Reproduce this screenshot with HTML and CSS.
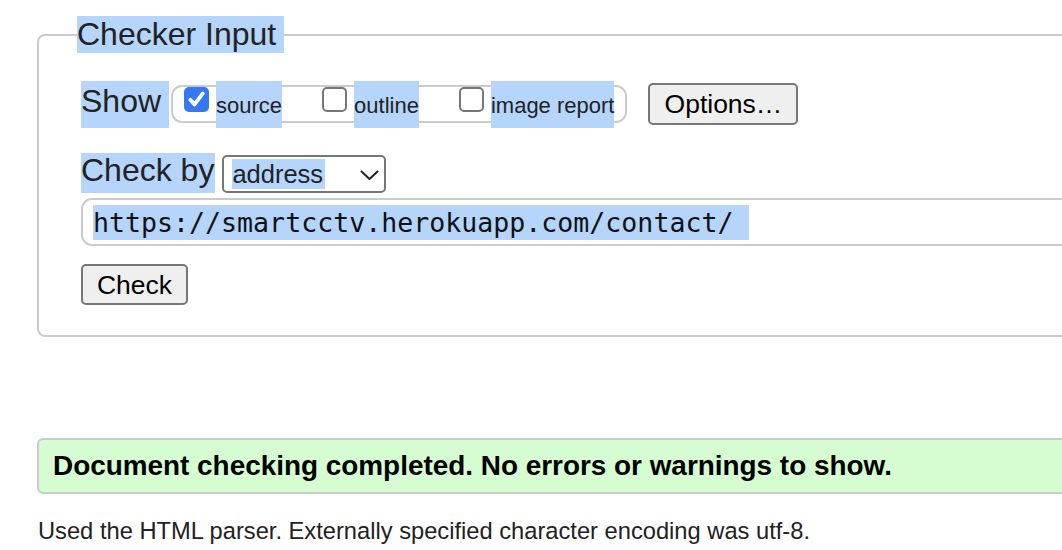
FILE: index.html
```html
<!DOCTYPE html>
<html lang="en">
<head>
<meta charset="utf-8">
<title>Checker Input</title>
<link rel="stylesheet" href="styles.css">
</head>
<body>
<div class="page">
  <fieldset class="checker">
    <legend class="legend"><span class="sel legend-text">Checker Input</span></legend>
    <div class="row row-show">
      <span class="sel label label-show">Show</span>
      <div class="group">
        <label class="opt">
          <span class="cb cb-checked"><svg width="25" height="25" viewBox="0 0 25 25"><path d="M6.3 12.8 L10.5 17.4 L18.8 6.4" fill="none" stroke="#fff" stroke-width="3.8" stroke-linecap="round" stroke-linejoin="round"/></svg></span>
          <span class="sel opt-text">source</span>
        </label>
        <label class="opt">
          <span class="cb"></span>
          <span class="sel opt-text">outline</span>
        </label>
        <label class="opt">
          <span class="cb"></span>
          <span class="sel opt-text">image report</span>
        </label>
      </div>
      <button class="btn btn-options" type="button">Options…</button>
    </div>
    <div class="row row-by">
      <span class="sel label label-by">Check by</span>
      <div class="select">
        <span class="sel select-val">address</span>
        <svg class="chevron" width="19" height="11" viewBox="0 0 19 11"><path d="M1.5 1.5 L9.5 9 L17.5 1.5" fill="none" stroke="#222" stroke-width="2" stroke-linecap="round" stroke-linejoin="round"/></svg>
      </div>
    </div>
    <div class="url"><span class="sel url-text">https://smartcctv.herokuapp.com/contact/ </span></div>
    <div class="row row-check">
      <button class="btn btn-check" type="button">Check</button>
    </div>
  </fieldset>
  <div class="success">Document checking completed. No errors or warnings to show.</div>
  <p class="details">Used the HTML parser. Externally specified character encoding was utf-8.</p>
</div>
</body>
</html>
```
FILE: styles.css
```css
html, body {
  margin: 0;
  padding: 0;
  background: #fff;
  overflow: hidden;
}
body {
  font-family: "Liberation Sans", Arial, sans-serif;
  color: #222;
}
.page {
  padding: 16px 0 0 37px;
  width: 1100px;
}
.sel {
  background: #b5d5fc;
}
.checker {
  margin: 0;
  width: 1100px;
  box-sizing: border-box;
  border: 2px solid #cbcbcb;
  border-radius: 8px;
  padding: 28px 0 30px 42px;
  min-width: 0;
}
.legend {
  padding: 0;
  margin-left: -4px;
  font-size: 32px;
  line-height: 37px;
  height: 37px;
}
.legend-text {
  display: inline-block;
  padding-right: 8px;
  height: 37px;
}
.row {
  display: flex;
  align-items: flex-start;
}
.row-show {
  height: 47px;
}
.label {
  display: block;
  font-size: 32px;
  box-sizing: border-box;
}
.label-show {
  line-height: 41px;
  height: 47px;
  padding-right: 8px;
}
.group {
  margin-left: 2px;
  margin-top: 4px;
  height: 38px;
  box-sizing: border-box;
  border: 2px solid #cbcbcb;
  border-radius: 11px;
  padding: 0 11px 0 11px;
  display: flex;
  align-items: flex-start;
  gap: 40px;
}
.opt {
  display: flex;
  align-items: flex-start;
  gap: 7px;
}
.cb {
  display: block;
  width: 25px;
  height: 25px;
  box-sizing: border-box;
  border: 2px solid #767676;
  border-radius: 5px;
  background: #fff;
}
.cb-checked {
  border: none;
  background: #3478f6;
}
.cb svg {
  display: block;
}
.opt-text {
  display: block;
  font-size: 22px;
  margin-top: -6px;
  height: 47px;
  box-sizing: border-box;
  padding-top: 2px;
  line-height: 45px;
  white-space: nowrap;
}
.btn {
  font-family: "Liberation Sans", Arial, sans-serif;
  font-size: 26.5px;
  color: #000;
  background: #efefef;
  border: 2px solid #767676;
  border-radius: 5px;
  padding: 0;
  box-sizing: border-box;
  line-height: 30px;
}
.btn-options {
  margin-left: 21px;
  margin-top: 2px;
  width: 150px;
  height: 42px;
}
.row-by {
  margin-top: 25px;
  height: 40px;
}
.label-by {
  line-height: 34px;
  height: 40px;
  padding-right: 1px;
}
.select {
  margin-left: 7px;
  margin-top: 2px;
  width: 164px;
  height: 38px;
  box-sizing: border-box;
  border: 2px solid #767676;
  border-radius: 5px;
  display: flex;
  align-items: flex-start;
  justify-content: space-between;
  padding: 2px 5px 0 8px;
}
.select-val {
  display: block;
  font-size: 25.5px;
  line-height: 30px;
  height: 30px;
  padding-right: 2px;
}
.chevron {
  margin-top: 11px;
  display: block;
}
.url {
  margin-top: 5px;
  height: 48px;
  box-sizing: border-box;
  border: 2px solid #cbcbcb;
  border-radius: 11px;
  padding: 5px 0 0 10px;
}
.url-text {
  display: inline-block;
  font-family: "DejaVu Sans Mono", "Liberation Mono", monospace;
  font-size: 26.6px;
  line-height: 35px;
  height: 35px;
  white-space: pre;
  color: #111;
}
.row-check {
  margin-top: 18px;
}
.btn-check {
  width: 107px;
  height: 41px;
}
.success {
  margin-top: 101px;
  height: 56px;
  box-sizing: border-box;
  border: 2px solid #cbcbcb;
  border-radius: 6px;
  background: #d6fcd1;
  padding-left: 14px;
  font-weight: bold;
  font-size: 27.9px;
  line-height: 52px;
  color: #000;
  white-space: nowrap;
}
.details {
  margin: 24px 0 0 1px;
  font-size: 23.7px;
  line-height: 27px;
  color: #222;
  white-space: nowrap;
}
```
